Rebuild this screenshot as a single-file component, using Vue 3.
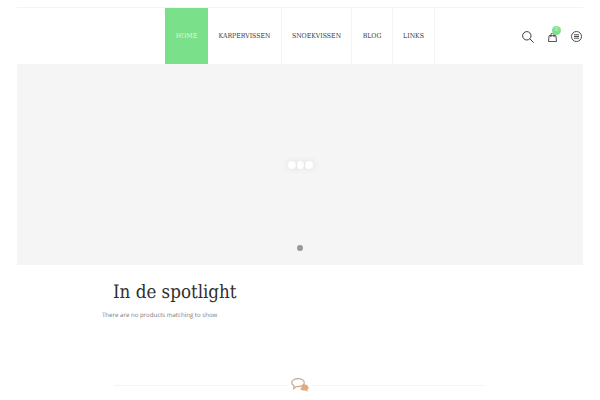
<script setup>
const menu = [
  { label: "HOME", active: true },
  { label: "KARPERVISSEN" },
  { label: "SNOEKVISSEN" },
  { label: "BLOG" },
  { label: "LINKS" },
];
</script>

<template>
  <div class="page">
    <header class="header">
      <nav class="nav">
        <a v-for="item in menu" :key="item.label" class="navItem" :class="{ active: item.active }">{{ item.label }}</a>
      </nav>
      <div class="tools">
        <svg class="icon" width="12" height="12" viewBox="0 0 12 12" fill="none" stroke="#3a3a3a" stroke-width="1">
          <circle cx="4.800" cy="4.800" r="4.200" />
          <path d="M7.900 7.900l3.700 3.700" />
        </svg>
        <div class="cart">
          <svg width="9" height="9" viewBox="0 0 10 10" fill="none" stroke="#3a3a3a" stroke-width="1">
            <path d="M1.200 3h7.600l.7 6.500H.5z" />
            <path d="M3.200 4.500V2a1.800 1.800 0 0 1 3.600 0v2.500" />
          </svg>
          <span class="badge">0</span>
        </div>
        <svg class="icon" width="11" height="11" viewBox="0 0 11 11" fill="none" stroke="#3a3a3a" stroke-width="0.900">
          <circle cx="5.500" cy="5.500" r="5" />
          <path d="M3 3.800h5M3 5.500h5M3 7.200h5" />
        </svg>
      </div>
    </header>

    <section class="slider">
      <div class="loader">
        <span></span><span></span><span></span>
      </div>
      <span class="dot"></span>
    </section>

    <section class="spotlight">
      <h2>In de spotlight</h2>
      <p>There are no products matching to show</p>
    </section>

    <div class="divider">
      <svg width="18" height="14" viewBox="0 0 18 14" fill="none">
        <path d="M11.500 6c2.500 0 5.500 1 6 3.200.2 1-.4 1.900-1.200 2.500l.5 2-2.700-1.300c-2 .3-4-.2-5.100-1.400 1.400-.9 2.400-2.900 2.500-5z" fill="#e2ab7e" />
        <path d="M7 .7c3.400 0 6.300 1.700 6.300 4s-2.900 4-6.300 4c-.6 0-1.100 0-1.600-.1L2.600 10.600l.5-2.800C1.600 7 .7 5.900.7 4.700c0-2.300 2.900-4 6.300-4z" fill="#fff" stroke="#c9a98e" stroke-width="1.200" />
      </svg>
    </div>
  </div>
</template>

<style scoped>
.page {
  width: 600px;
  height: 400px;
  padding: 7px 17px 0;
  box-sizing: border-box;
  overflow: hidden;
  background: #fff;
  font-family: "DejaVu Serif Condensed", "DejaVu Serif", serif;
  text-rendering: geometricPrecision;
}

.header {
  height: 57px;
  box-sizing: border-box;
  border-top: 1px solid #f3f3f3;
  display: flex;
  justify-content: space-between;
  align-items: stretch;
}

.nav {
  display: flex;
  margin-left: 148px;
}

.navItem {
  display: flex;
  align-items: center;
  justify-content: center;
  box-sizing: border-box;
  border-right: 1px solid #f4f4f4;
  color: #3a3a3a;
  font-size: 6.900px;
}

.navItem:nth-child(1) {
  width: 43px;
  border-right: 0;
  background: #7be08a;
  color: #dff6e3;
}

.navItem:nth-child(2) {
  width: 74px;
}

.navItem:nth-child(3) {
  width: 70px;
}

.navItem:nth-child(4) {
  width: 41px;
}

.navItem:nth-child(5) {
  width: 42px;
}

.tools {
  display: flex;
  align-items: center;
  gap: 14px;
  padding-top: 1px;
  padding-right: 1px;
}

.icon {
  display: block;
}

.cart {
  position: relative;
  display: flex;
  margin-top: 2px;
}

.badge {
  position: absolute;
  top: -7px;
  left: 4px;
  width: 9px;
  height: 9px;
  border-radius: 50%;
  background: #7be08a;
  color: #d8f6dd;
  font-family: "Liberation Sans", sans-serif;
  font-size: 6px;
  line-height: 9px;
  text-align: center;
}

.slider {
  position: relative;
  height: 201px;
  background: #f5f5f5;
}

.loader {
  position: absolute;
  top: 97px;
  left: 271px;
  display: flex;
}

.loader span {
  width: 7.500px;
  height: 7.500px;
  margin-right: 1px;
  border-radius: 50%;
  background: #fff;
  box-shadow: 0 0 7px rgba(0, 0, 0, 0.1);
}

.dot {
  position: absolute;
  top: 181px;
  left: 280px;
  width: 6px;
  height: 6px;
  border-radius: 50%;
  background: #999;
}

.spotlight {
  padding-left: 85px;
}

.spotlight h2 {
  margin: 17px 0 0 11px;
  color: #2f2f2f;
  font-size: 18.600px;
  font-weight: 400;
  line-height: 22px;
}

.spotlight p {
  margin: 5px 0 0;
  color: #777;
  font-family: "Open Sans", sans-serif;
  font-size: 6.100px;
  line-height: 11px;
}

.divider {
  margin: 65px 98px 0 97px;
  height: 1px;
  background: #f3f3f3;
  display: flex;
  justify-content: center;
  align-items: center;
}

.divider svg {
  padding: 0 4px;
  background: #fff;
  flex: none;
  margin-top: -1px;
}
</style>
